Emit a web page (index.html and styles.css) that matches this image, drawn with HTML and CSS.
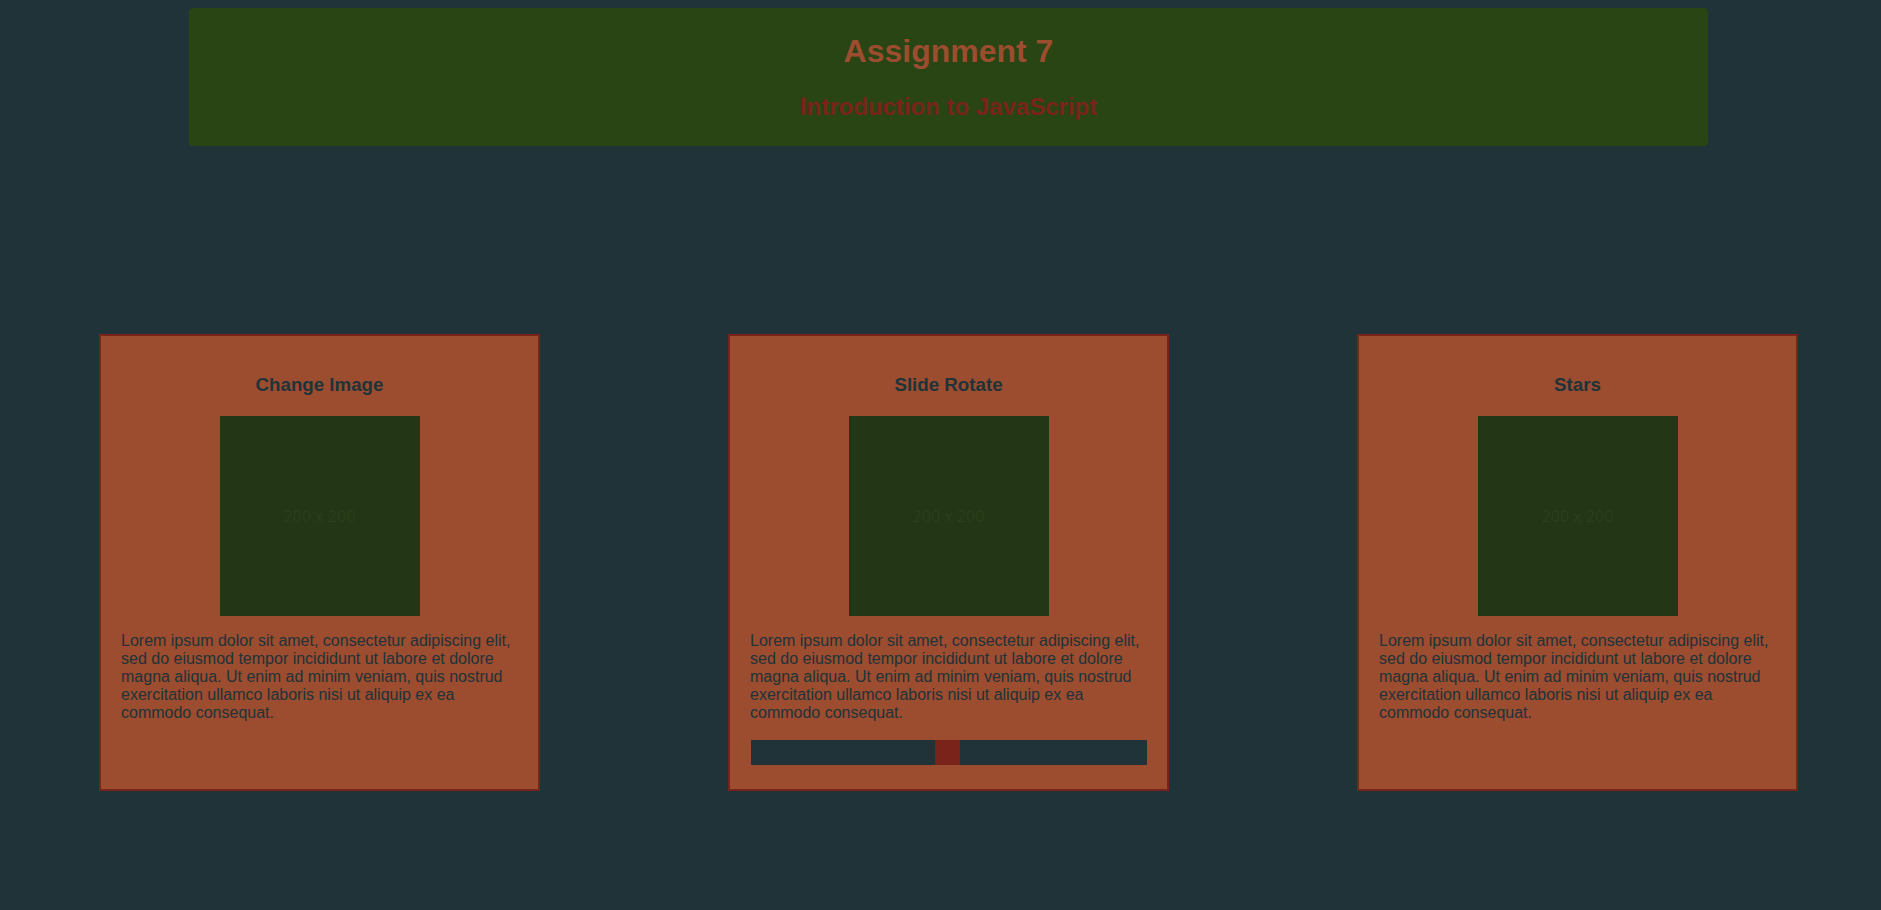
FILE: index.html
```html
<!DOCTYPE html>
<html lang="en">
<head>
<meta charset="utf-8">
<title>Assignment 7</title>
<link rel="stylesheet" href="styles.css">
</head>
<body>
<div class="page">
  <header class="banner">
    <h1 class="banner-title">Assignment 7</h1>
    <h2 class="banner-sub">Introduction to JavaScript</h2>
  </header>
  <main class="cards">
    <section class="card">
      <h3 class="card-title">Change Image</h3>
      <div class="thumb"><span class="thumb-label">200 x 200</span></div>
      <p class="card-text">Lorem ipsum dolor sit amet, consectetur adipiscing elit, sed do eiusmod tempor incididunt ut labore et dolore magna aliqua. Ut enim ad minim veniam, quis nostrud exercitation ullamco laboris nisi ut aliquip ex ea commodo consequat.</p>
    </section>
    <section class="card">
      <h3 class="card-title">Slide Rotate</h3>
      <div class="thumb"><span class="thumb-label">200 x 200</span></div>
      <p class="card-text">Lorem ipsum dolor sit amet, consectetur adipiscing elit, sed do eiusmod tempor incididunt ut labore et dolore magna aliqua. Ut enim ad minim veniam, quis nostrud exercitation ullamco laboris nisi ut aliquip ex ea commodo consequat.</p>
      <div class="slider"><span class="slider-thumb"></span></div>
    </section>
    <section class="card">
      <h3 class="card-title">Stars</h3>
      <div class="thumb"><span class="thumb-label">200 x 200</span></div>
      <p class="card-text">Lorem ipsum dolor sit amet, consectetur adipiscing elit, sed do eiusmod tempor incididunt ut labore et dolore magna aliqua. Ut enim ad minim veniam, quis nostrud exercitation ullamco laboris nisi ut aliquip ex ea commodo consequat.</p>
    </section>
  </main>
</div>
</body>
</html>
```
FILE: styles.css
```css
html, body {
  margin: 0;
  padding: 0;
  background: #203338;
}
body {
  font-family: "Liberation Sans", Arial, sans-serif;
  color: #203338;
  height: 910px;
  overflow: hidden;
}
.page {
  padding-left: 16px;
  padding-top: 8px;
}
.banner {
  margin: 0 173px;
  background: #284513;
  border-radius: 4px;
  padding: 25px 0 25px;
  text-align: center;
}
.banner-title {
  margin: 0 0 23px;
  font-size: 32px;
  font-weight: bold;
  line-height: 37px;
  color: #9c4c2f;
}
.banner-sub {
  margin: 0;
  font-size: 24px;
  font-weight: bold;
  line-height: 28px;
  color: #7a231b;
}
.cards {
  display: flex;
  align-items: stretch;
  gap: 188px;
  margin-top: 188px;
  padding-left: 83px;
}
.card {
  box-sizing: border-box;
  width: 441px;
  height: 457px;
  background: #9c4c2f;
  border: 2px solid #7a231b;
  padding: 38px 20px 20px;
  display: flex;
  flex-direction: column;
  align-items: center;
}
.card-title {
  margin: 0 0 20px;
  font-size: 18.72px;
  line-height: 22px;
  font-weight: bold;
  color: #203338;
}
.thumb {
  width: 200px;
  height: 200px;
  flex: none;
  background: #233616;
  display: flex;
  align-items: center;
  justify-content: center;
}
.thumb-label {
  font-family: "Open Sans", "Noto Sans", sans-serif;
  font-size: 16px;
  color: #29401b;
}
.card-text {
  align-self: stretch;
  margin: 16px 0 0;
  font-size: 16px;
  line-height: 18px;
  color: #203338;
}
.slider {
  align-self: stretch;
  margin: 18px 0 0 1px;
  height: 25px;
  background: #203338;
  display: flex;
  justify-content: center;
}
.slider-thumb {
  width: 25px;
  height: 25px;
  margin-left: -4px;
  background: #7a231b;
}
```
